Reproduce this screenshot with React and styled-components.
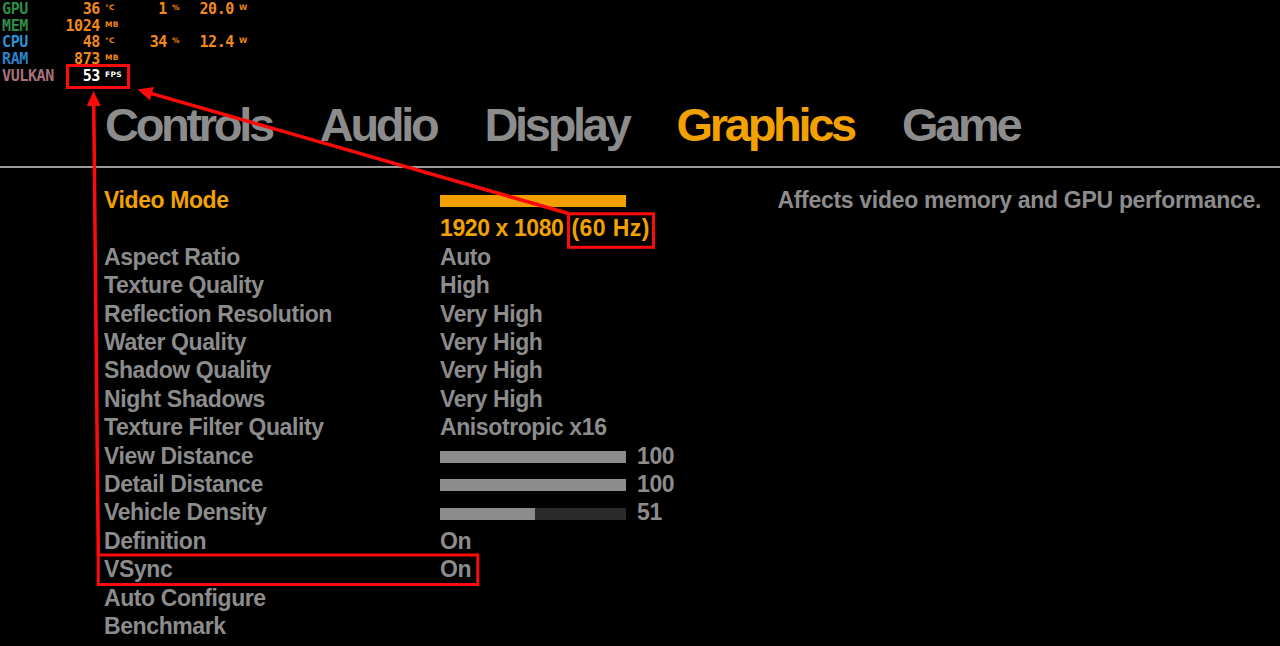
import React from 'react';
import styled, { createGlobalStyle } from 'styled-components';

const Global = createGlobalStyle`
  html, body { margin: 0; padding: 0; background: #000; }
  body { width: 1280px; height: 646px; overflow: hidden; }
`;

const GRAY = '#8c8c8c';
const ORANGE = '#f2a200';
const RED = '#ff0a0a';

const Screen = styled.div`
  position: relative;
  width: 1280px;
  height: 646px;
  background: #000;
  overflow: hidden;
  font-family: "Liberation Sans", Arial, sans-serif;
`;

/* ---------- performance overlay ---------- */
const Hud = styled.div`
  position: absolute;
  top: 1px;
  left: 0;
  font-family: "DejaVu Sans Mono", monospace;
  font-weight: 700;
  font-size: 15px;
  line-height: 16.7px;
  letter-spacing: -0.4px;
  z-index: 2;
`;

const HudRow = styled.div`
  display: grid;
  grid-template-columns: 56px 44px 26px 41px 31px 36px 20px;
  height: 16.7px;
`;

const HudLabel = styled.span`
  padding-left: 2px;
  color: ${p => p.$color};
`;

const HudValue = styled.span`
  text-align: right;
  color: ${p => (p.$white ? '#ffffff' : '#f28a1a')};
`;

const HudUnit = styled.span`
  align-self: start;
  padding: 3px 0 0 5px;
  font-family: "DejaVu Sans", sans-serif;
  font-weight: 700;
  font-size: 7.5px;
  line-height: 1;
  letter-spacing: 0.3px;
  color: ${p => (p.$white ? '#ffffff' : '#f28a1a')};
`;

/* ---------- menu ---------- */
const Tabs = styled.nav`
  display: flex;
  gap: 48px;
  padding: 101px 0 0 105px;
  font-size: 47px;
  line-height: 47px;
  font-weight: 700;
  letter-spacing: -3.3px;
`;

const Tab = styled.span`
  color: ${p => (p.$active ? ORANGE : GRAY)};
`;

const Divider = styled.div`
  height: 2px;
  margin-top: 18px;
  background: #9a9a9a;
`;

const Content = styled.div`
  display: flex;
  padding-top: 18px;
  font-size: 23px;
  line-height: 28.4px;
  font-weight: 700;
  letter-spacing: -0.4px;
`;

const SettingsList = styled.div`
  display: flex;
  flex-direction: column;
  padding-left: 104px;
  flex: none;
`;

const Row = styled.div`
  display: grid;
  grid-template-columns: 336px auto;
  color: ${p => (p.$active ? ORANGE : GRAY)};
`;

const Label = styled.span`
  white-space: nowrap;
`;

const ValueCell = styled.div`
  display: flex;
  flex-direction: column;
  white-space: nowrap;
`;

const Line = styled.div`
  height: 28.4px;
  display: flex;
  align-items: center;
  gap: 11px;
`;

const Refresh = styled.span`
  margin-left: -3px;
  letter-spacing: 0.4px;
`;

const ModeBar = styled.div`
  width: 186px;
  height: 12px;
  margin-top: 2px;
  background: #f0a000;
`;

const Track = styled.div`
  width: 186px;
  height: 12px;
  margin-top: 2px;
  background: #2a2a2a;
  display: flex;
`;

const Fill = styled.div`
  height: 100%;
  background: #8c8c8c;
`;

const Description = styled.div`
  flex: 1;
  text-align: right;
  padding-right: 19px;
  color: ${GRAY};
  letter-spacing: -0.3px;
  white-space: nowrap;
`;

/* ---------- annotation layer ---------- */
const Annotations = styled.svg`
  position: absolute;
  inset: 0;
  pointer-events: none;
  z-index: 3;
`;

function Arrow({ from, to, head = 15, half = 7 }) {
  const dx = to[0] - from[0];
  const dy = to[1] - from[1];
  const len = Math.hypot(dx, dy);
  const ux = dx / len;
  const uy = dy / len;
  const bx = to[0] - ux * head;
  const by = to[1] - uy * head;
  const nx = -uy;
  const ny = ux;
  const pts = `${to[0]},${to[1]} ${bx + nx * half},${by + ny * half} ${bx - nx * half},${by - ny * half}`;
  return (
    <g>
      <line x1={from[0]} y1={from[1]} x2={bx + ux * 2} y2={by + uy * 2} stroke={RED} strokeWidth="3.5" />
      <polygon points={pts} fill={RED} />
    </g>
  );
}

const hud = [
  { label: 'GPU', color: '#2f8c48', v1: '36', u1: '°C', v2: '1', u2: '%', v3: '20.0', u3: 'W' },
  { label: 'MEM', color: '#2f8c48', v1: '1024', u1: 'MB' },
  { label: 'CPU', color: '#2f90d2', v1: '48', u1: '°C', v2: '34', u2: '%', v3: '12.4', u3: 'W' },
  { label: 'RAM', color: '#2b82c9', v1: '873', u1: 'MB' },
  { label: 'VULKAN', color: '#a8717a', v1: '53', u1: 'FPS', white: true },
];

const tabs = ['Controls', 'Audio', 'Display', 'Graphics', 'Game'];

const settings = [
  { label: 'Aspect Ratio', value: 'Auto' },
  { label: 'Texture Quality', value: 'High' },
  { label: 'Reflection Resolution', value: 'Very High' },
  { label: 'Water Quality', value: 'Very High' },
  { label: 'Shadow Quality', value: 'Very High' },
  { label: 'Night Shadows', value: 'Very High' },
  { label: 'Texture Filter Quality', value: 'Anisotropic x16' },
  { label: 'View Distance', slider: 100 },
  { label: 'Detail Distance', slider: 100 },
  { label: 'Vehicle Density', slider: 51 },
  { label: 'Definition', value: 'On' },
  { label: 'VSync', value: 'On' },
  { label: 'Auto Configure' },
  { label: 'Benchmark' },
];

export default function App() {
  return (
    <Screen>
      <Global />
      <Hud>
        {hud.map(r => (
          <HudRow key={r.label}>
            <HudLabel $color={r.color}>{r.label}</HudLabel>
            <HudValue $white={r.white}>{r.v1}</HudValue>
            <HudUnit $white={r.white}>{r.u1}</HudUnit>
            <HudValue>{r.v2 || ''}</HudValue>
            <HudUnit>{r.u2 || ''}</HudUnit>
            <HudValue>{r.v3 || ''}</HudValue>
            <HudUnit>{r.u3 || ''}</HudUnit>
          </HudRow>
        ))}
      </Hud>

      <Tabs>
        {tabs.map(t => (
          <Tab key={t} $active={t === 'Graphics'}>{t}</Tab>
        ))}
      </Tabs>
      <Divider />

      <Content>
        <SettingsList>
          <Row $active>
            <Label>Video Mode</Label>
            <ValueCell>
              <Line><ModeBar /></Line>
              <Line>1920 x 1080 <Refresh>(60 Hz)</Refresh></Line>
            </ValueCell>
          </Row>
          {settings.map(s => (
            <Row key={s.label}>
              <Label>{s.label}</Label>
              <ValueCell>
                {s.slider !== undefined ? (
                  <Line>
                    <Track><Fill style={{ width: `${s.slider}%` }} /></Track>
                    {s.slider}
                  </Line>
                ) : (
                  <Line>{s.value || ''}</Line>
                )}
              </ValueCell>
            </Row>
          ))}
        </SettingsList>
        <Description>Affects video memory and GPU performance.</Description>
      </Content>

      <Annotations width="1280" height="646" viewBox="0 0 1280 646">
        <rect x="67.5" y="65.5" width="61" height="22" fill="none" stroke={RED} strokeWidth="3" />
        <rect x="568.5" y="213.8" width="85" height="33.5" fill="none" stroke={RED} strokeWidth="3" />
        <rect x="98.2" y="555" width="379.6" height="29.5" fill="none" stroke={RED} strokeWidth="3" />
        <Arrow from={[98.3, 555]} to={[93.6, 91]} />
        <Arrow from={[568.5, 213.5]} to={[137.5, 89.5]} />
      </Annotations>
    </Screen>
  );
}
